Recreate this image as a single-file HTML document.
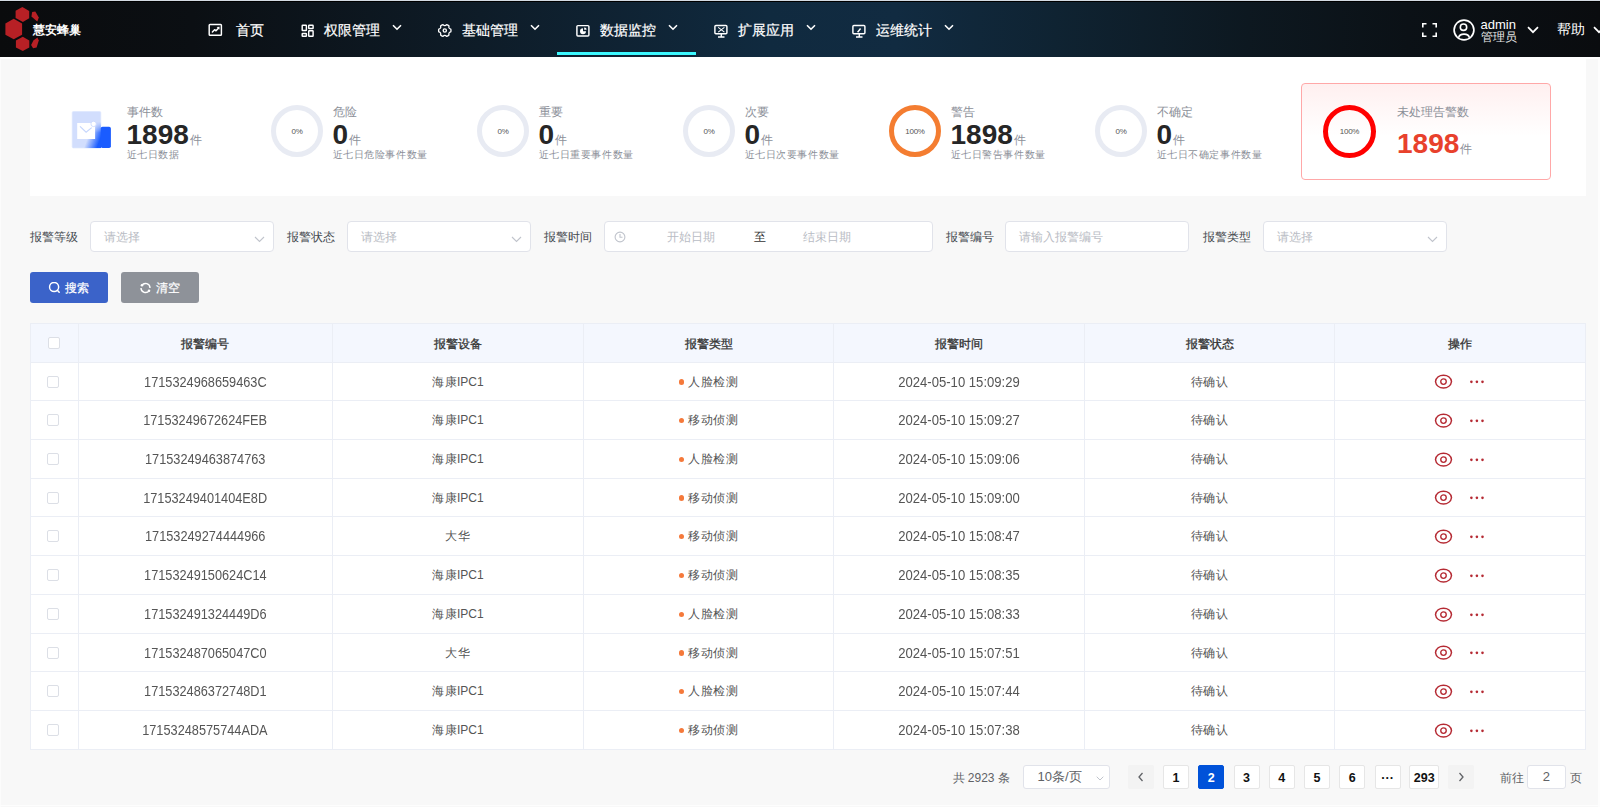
<!DOCTYPE html>
<html><head><meta charset="utf-8"><title>数据监控</title>
<style>
*{box-sizing:border-box;margin:0;padding:0}
html,body{width:1600px;height:807px;overflow:hidden}
body{background:#f8f8f8;font-family:"Liberation Sans",sans-serif;position:relative;color:#333}
.abs{position:absolute}
#topline{position:absolute;left:0;top:0;width:1600px;height:1px;background:#d3dae2}
#hdr{position:absolute;left:0;top:1px;width:1600px;height:56px;
 background:linear-gradient(90deg,#0a0b0d 0%,#0b0f13 12%,#0e1c28 30%,#102a3f 48%,#112b41 56%,#0f2332 66%,#0d1820 78%,#0b1116 88%,#0a0c0f 100%)}
#hdr .line0{position:absolute;left:0;top:0;width:1600px;height:1px;background:#000}
.nav{position:absolute;top:0;height:56px;color:#fff;font-size:13.5px;white-space:nowrap}
.nav .ic{position:absolute;top:23px}
.nav .tx{position:absolute;top:21px;line-height:20px;-webkit-text-stroke:0.2px #fff}
.nav .ch{position:absolute;top:24px}
#uline{position:absolute;left:557px;top:52px;width:139px;height:3.4px;background:#3cf8ff}
#whitestrip{position:absolute;left:0;top:57px;width:1600px;height:2px;background:#fff}
#stats{position:absolute;left:30px;top:57px;width:1556px;height:139px;background:#fff}
.st{position:absolute;white-space:nowrap}
.st .lb{position:absolute;left:0;top:1px;font-size:12px;line-height:14px;color:#8c9099}
.st .num{position:absolute;left:0;top:14px;font-size:28px;font-weight:bold;line-height:34px;color:#262626}
.st .unit{font-size:12px;font-weight:normal;color:#8c9099;margin-left:1px}
.st .sub{position:absolute;left:0;top:44px;font-size:10px;letter-spacing:0.6px;line-height:14px;color:#8c9099}
.ring{position:absolute;width:52px;height:52px;border-radius:50%;border:5px solid #e8ebf3}
.ring span{position:absolute;left:0;right:0;top:0;bottom:0;display:flex;align-items:center;justify-content:center;font-size:8px;color:#555;letter-spacing:-0.3px}
#redbox{position:absolute;left:1301px;top:82.5px;width:250px;height:97px;border:1px solid #ffa8a8;border-radius:4px;background:linear-gradient(180deg,#fff0f0 0%,#fff 55%,#fff 100%)}
.flb{position:absolute;top:229px;font-size:12px;line-height:16px;color:#464a50;white-space:nowrap}
.inp{position:absolute;top:221px;height:31px;background:#fff;border:1px solid #e1e3ea;border-radius:4px}
.ph{position:absolute;top:7px;font-size:12px;line-height:16px;color:#b9bcc4;white-space:nowrap}
.chev{position:absolute;top:14px}
.btn{position:absolute;top:272px;height:31px;width:78px;border-radius:3px;color:#fff;font-size:12px;white-space:nowrap}
.btn .bi{position:absolute}
.btn .bt{position:absolute;top:8px;line-height:16px;-webkit-text-stroke:0.2px #fff}
#tbl{position:absolute;background:#fff}
#tblb{position:absolute;left:30px;top:323px;width:1556px;height:427px;border:1px solid #ebeef5}
.th{position:absolute;background:#f4f7fe}
.thc{position:absolute;text-align:center;font-size:12px;font-weight:500;color:#333;-webkit-text-stroke:0.3px #333;white-space:nowrap}
.hl{position:absolute;left:30px;width:1556px;height:1px;background:#ebeef5}
.vl{position:absolute;top:323px;width:1px;height:427px;background:#ebeef5}
.td{position:absolute;height:38px;line-height:38px;text-align:center;font-size:13px;color:#555;white-space:nowrap}
.cj{font-size:12px;letter-spacing:0.5px}
.nm{display:inline-block;font-size:14px;transform-origin:50% 50%}
.cb{position:absolute;width:12px;height:12px;border:1px solid #dcdfe6;border-radius:2px;background:#fff}
.dot{display:inline-block;width:5.3px;height:5.3px;border-radius:50%;background:#f5793a;margin-right:4.5px;vertical-align:middle;position:relative;top:0px}
.eye{vertical-align:middle;position:relative;top:-0.5px}
.more{display:inline-block;vertical-align:middle;margin-left:16px;position:relative;top:-3px}
.more i{display:inline-block;width:2.6px;height:2.6px;border-radius:50%;background:#b52a33;margin:0 1.5px}
.pg{position:absolute;top:765px;height:24px;white-space:nowrap}
.pb{position:absolute;top:765px;height:24px;width:26.2px;background:#fff;border:1px solid #e6e6e6;border-radius:2px;text-align:center;line-height:25px;font-size:12.5px;font-weight:bold;color:#111}
.pb.act{background:#0052d9;border-color:#0052d9;color:#fff}
.pb.nav2{background:#f3f3f3;border-color:#f3f3f3;line-height:20px;font-weight:normal;color:#606266}

</style></head><body>
<div id="topline"></div>
<div id="hdr"><div class="line0"></div></div>
<!-- logo -->
<svg class="abs" style="left:0;top:0" width="45" height="57" viewBox="0 0 45 57">
 <g fill="#b82025">
  <polygon points="13.7,18.7 22.1,23.4 22.1,34.8 13.7,39.2 5.4,34.8 5.4,23.4"/>
  <polygon points="22.4,7 29.2,10.9 29.2,18.2 22.9,22 15.6,18 15.6,10.8"/>
  <polygon points="22.8,36.8 29.3,40.6 29.3,47.4 22.8,50.9 15.9,47.4 15.9,40.6"/>
  <polygon points="32.2,11.9 35.3,11.6 38.8,17.6 37.3,21.6 31.4,16.5"/>
  <polygon points="37.4,37.4 38.8,40.6 36.6,47.4 33.1,48.3 31.1,45 33.4,40.6"/>
 </g>
</svg>
<div class="abs" style="left:33px;top:22px;font-size:12px;line-height:16px;font-weight:bold;color:#fff;white-space:nowrap">慧安蜂巢</div>

<!-- nav -->
<svg class="abs" style="left:0;top:0" width="1000" height="57" viewBox="0 0 1000 57">
 <g fill="none" stroke="#fff" stroke-width="1.45">
  <rect x="209.2" y="24.5" width="12.2" height="10.8" rx="0.8"/>
  <polyline points="212.4,32 214.6,29.7 216,30.8 218.4,28.2" stroke-width="1.5" stroke-linejoin="round" stroke-linecap="round"/>
  <rect x="302.2" y="25.3" width="4.2" height="5.2" rx="0.5"/>
  <rect x="308.7" y="25.3" width="4.4" height="3.1" rx="0.5"/>
  <rect x="302.2" y="33.4" width="4.2" height="2.8" rx="0.5"/>
  <rect x="308.7" y="30.8" width="4.4" height="5.4" rx="0.5"/>
  <path d="M450.84,29.11 A6.2,6.2 0 0 1 450.84,31.89 Q448.18,32.45 449.03,35.03 A6.2,6.2 0 0 1 446.61,36.43 Q444.80,34.40 442.99,36.43 A6.2,6.2 0 0 1 440.57,35.03 Q441.42,32.45 438.76,31.89 A6.2,6.2 0 0 1 438.76,29.11 Q441.42,28.55 440.57,25.97 A6.2,6.2 0 0 1 442.99,24.57 Q444.80,26.60 446.61,24.57 A6.2,6.2 0 0 1 449.03,25.97 Q448.18,28.55 450.84,29.11 Z" stroke-linejoin="round" stroke-width="1.3"/>
  <circle cx="444.8" cy="30.5" r="1.6" stroke-width="1.4"/>
  <rect x="576.9" y="25.6" width="12" height="10.4" rx="1"/>
  <rect x="714.9" y="25.4" width="12" height="8.4" rx="1"/>
  <path d="M721.3,34 V36.2 M718,36.9 H724.5"/>
  <rect x="852.9" y="25.4" width="12" height="8.4" rx="1"/>
  <path d="M859.3,34 V36.2 M856,36.9 H862.5"/>
 </g>
 <g fill="#fff">
  <polygon points="216.6,27 219.6,26.8 219.4,29.8"/>
  <path d="M583,28.2 A3,3 0 1 0 586,31.2 L583,31.2 Z"/>
  <path d="M584.2,27.4 A2.3,2.3 0 0 1 586.6,29.8 L584.2,29.8 Z"/>
 </g>
 <g stroke="#fff" stroke-width="1.05" fill="none">
  <path d="M718.2,27.4 L724.4,32.1 M724.4,27.4 L718.2,32.1"/>
  <path d="M857.6,32.2 L860.6,28.6" stroke-width="1.5"/>
 </g>
</svg>

<div class="nav" style="left:0;width:1600px">
 <div class="tx" style="left:236px">首页</div>
 <div class="tx" style="left:323.5px">权限管理</div>
 <svg class="ch" style="left:392px" width="10" height="7" viewBox="0 0 10 7"><polyline points="1,1.2 5,5.2 9,1.2" fill="none" stroke="#fff" stroke-width="1.6"/></svg>
 <div class="tx" style="left:461.5px">基础管理</div>
 <svg class="ch" style="left:530px" width="10" height="7" viewBox="0 0 10 7"><polyline points="1,1.2 5,5.2 9,1.2" fill="none" stroke="#fff" stroke-width="1.6"/></svg>
 <div class="tx" style="left:599.5px">数据监控</div>
 <svg class="ch" style="left:668px" width="10" height="7" viewBox="0 0 10 7"><polyline points="1,1.2 5,5.2 9,1.2" fill="none" stroke="#fff" stroke-width="1.6"/></svg>
 <div class="tx" style="left:737.5px">扩展应用</div>
 <svg class="ch" style="left:806px" width="10" height="7" viewBox="0 0 10 7"><polyline points="1,1.2 5,5.2 9,1.2" fill="none" stroke="#fff" stroke-width="1.6"/></svg>
 <div class="tx" style="left:875.5px">运维统计</div>
 <svg class="ch" style="left:943.5px" width="10" height="7" viewBox="0 0 10 7"><polyline points="1,1.2 5,5.2 9,1.2" fill="none" stroke="#fff" stroke-width="1.6"/></svg>
</div>
<div id="uline"></div>

<!-- right header -->
<svg class="abs" style="left:1422px;top:23px" width="15" height="14" viewBox="0 0 15 14"><path d="M0.8,4.5 V0.8 H4.5 M10.5,0.8 H14.2 V4.5 M14.2,9.5 V13.2 H10.5 M4.5,13.2 H0.8 V9.5" fill="none" stroke="#fff" stroke-width="1.6"/></svg>
<svg class="abs" style="left:1453px;top:19px" width="22" height="22" viewBox="0 0 22 22"><circle cx="11" cy="11" r="9.9" fill="none" stroke="#fff" stroke-width="1.7"/><circle cx="10.5" cy="8.2" r="3.2" fill="none" stroke="#fff" stroke-width="1.6"/><path d="M5.6,18.6 C6.6,13.9 15.4,13.9 16.4,18.6" fill="none" stroke="#fff" stroke-width="1.6"/></svg>
<div class="abs" style="left:1480.5px;top:17px;font-size:13px;line-height:16px;color:#fff">admin</div>
<div class="abs" style="left:1480.5px;top:29px;font-size:12px;line-height:16px;color:#e8e8e8">管理员</div>
<svg class="abs" style="left:1527px;top:26px" width="12" height="8" viewBox="0 0 12 8"><polyline points="1,1.2 6,6.2 11,1.2" fill="none" stroke="#fff" stroke-width="1.7"/></svg>
<div class="abs" style="left:1556.5px;top:19px;font-size:14px;line-height:20px;color:#fff">帮助</div>
<svg class="abs" style="left:1593px;top:26px" width="12" height="8" viewBox="0 0 12 8"><polyline points="1,1.2 6,6.2 11,1.2" fill="none" stroke="#fff" stroke-width="1.7"/></svg>

<div id="whitestrip"></div>
<div class="abs" style="left:0;top:57px;width:1px;height:750px;background:#fcfcfc"></div>
<div class="abs" style="left:1598px;top:57px;width:2px;height:750px;background:#fdfdfd"></div>
<div class="abs" style="left:0;top:805px;width:1600px;height:1px;background:#fdfdfd"></div>
<div id="stats"></div>

<!-- stat1 icon -->
<svg class="abs" style="left:66px;top:105px" width="50" height="50" viewBox="0 0 50 50">
 <defs>
  <linearGradient id="lg1" gradientUnits="userSpaceOnUse" x1="18.6" y1="41" x2="30" y2="45.3"><stop offset="0" stop-color="#1a5cff" stop-opacity="0"/><stop offset="1" stop-color="#1a5cff"/></linearGradient>
  <linearGradient id="vm1" x1="0" y1="0" x2="0" y2="1"><stop offset="0.15" stop-color="#000"/><stop offset="0.5" stop-color="#fff"/></linearGradient>
  <mask id="mk1" maskUnits="userSpaceOnUse" x="0" y="0" width="50" height="50"><rect x="14" y="12" width="21" height="31.2" fill="url(#vm1)"/></mask>
 </defs>
 <rect x="6.2" y="6.5" width="28.6" height="36.4" rx="1.2" fill="#d2defd" stroke="#dce6fd" stroke-width="0.7"/>
 <rect x="14" y="12" width="21" height="31.2" fill="url(#lg1)" mask="url(#mk1)"/>
 <rect x="34.7" y="21.7" width="10.2" height="21.4" rx="1.8" fill="#1a5cff"/>
 <rect x="11.2" y="18" width="17.9" height="16" fill="#fff"/>
 <polyline points="14,21.4 20.1,27.3 25.7,22.6" fill="none" stroke="#c6d6fc" stroke-width="1.2"/>
 <circle cx="27.6" cy="18.9" r="2.7" fill="#fff" stroke="#c6d6fc" stroke-width="0.8"/>
</svg>
<div class="st" style="left:126.5px;top:104px"><div class="lb">事件数</div><div class="num">1898<span class="unit">件</span></div><div class="sub">近七日数据</div></div>

<div class="ring" style="left:271px;top:105px"><span>0%</span></div>
<div class="st" style="left:332.5px;top:104px"><div class="lb">危险</div><div class="num">0<span class="unit">件</span></div><div class="sub">近七日危险事件数量</div></div>
<div class="ring" style="left:477px;top:105px"><span>0%</span></div>
<div class="st" style="left:538.5px;top:104px"><div class="lb">重要</div><div class="num">0<span class="unit">件</span></div><div class="sub">近七日重要事件数量</div></div>
<div class="ring" style="left:683px;top:105px"><span>0%</span></div>
<div class="st" style="left:744.5px;top:104px"><div class="lb">次要</div><div class="num">0<span class="unit">件</span></div><div class="sub">近七日次要事件数量</div></div>
<div class="ring" style="left:889px;top:105px;border-color:#f47d31"><span>100%</span></div>
<div class="st" style="left:950.5px;top:104px"><div class="lb">警告</div><div class="num">1898<span class="unit">件</span></div><div class="sub">近七日警告事件数量</div></div>
<div class="ring" style="left:1095px;top:105px"><span>0%</span></div>
<div class="st" style="left:1156.5px;top:104px"><div class="lb">不确定</div><div class="num">0<span class="unit">件</span></div><div class="sub">近七日不确定事件数量</div></div>

<div id="redbox"></div>
<div class="ring" style="left:1323px;top:104.5px;width:53px;height:53px;border:5.5px solid #ff0000"><span>100%</span></div>
<div class="st" style="left:1397px;top:104px"><div class="lb">未处理告警数</div><div class="num" style="top:23px;color:#e8412c">1898<span class="unit">件</span></div></div>

<!-- filters -->
<div class="flb" style="left:30px">报警等级</div>
<div class="inp" style="left:90px;width:184px"><div class="ph" style="left:13px">请选择</div><svg class="chev" style="left:163px" width="11" height="7" viewBox="0 0 11 7"><polyline points="1,1 5.5,5.5 10,1" fill="none" stroke="#c0c4cc" stroke-width="1.1"/></svg></div>
<div class="flb" style="left:287px">报警状态</div>
<div class="inp" style="left:346.5px;width:184px"><div class="ph" style="left:13px">请选择</div><svg class="chev" style="left:163px" width="11" height="7" viewBox="0 0 11 7"><polyline points="1,1 5.5,5.5 10,1" fill="none" stroke="#c0c4cc" stroke-width="1.1"/></svg></div>
<div class="flb" style="left:543.5px">报警时间</div>
<div class="inp" style="left:603.5px;width:329px">
 <svg class="abs" style="left:9.5px;top:8.5px" width="12" height="12" viewBox="0 0 12 12"><circle cx="6" cy="6" r="4.9" fill="none" stroke="#c0c4cc" stroke-width="1.1"/><path d="M6,3 V6.3 H8.5" fill="none" stroke="#c0c4cc" stroke-width="1.1"/></svg>
 <div class="ph" style="left:62px">开始日期</div>
 <div class="ph" style="left:149px;color:#333">至</div>
 <div class="ph" style="left:198px">结束日期</div>
</div>
<div class="flb" style="left:945.5px">报警编号</div>
<div class="inp" style="left:1005px;width:184px"><div class="ph" style="left:13px">请输入报警编号</div></div>
<div class="flb" style="left:1202.5px">报警类型</div>
<div class="inp" style="left:1262.5px;width:184px"><div class="ph" style="left:13px">请选择</div><svg class="chev" style="left:163px" width="11" height="7" viewBox="0 0 11 7"><polyline points="1,1 5.5,5.5 10,1" fill="none" stroke="#c0c4cc" stroke-width="1.1"/></svg></div>

<div class="btn" style="left:30px;background:#3b63c9">
 <svg class="bi" style="left:18px;top:10px" width="13" height="13" viewBox="0 0 13 13"><circle cx="6.1" cy="5" r="4.55" fill="none" stroke="#fff" stroke-width="1.45"/><path d="M9.3,8.3 L11.2,10.3" stroke="#fff" stroke-width="1.5" stroke-linecap="round"/></svg>
 <div class="bt" style="left:34.5px">搜索</div>
</div>
<div class="btn" style="left:120.5px;background:#8e9299">
 <svg class="bi" style="left:19px;top:9.5px" width="12" height="12" viewBox="0 0 12 12"><g fill="none" stroke="#fff" stroke-width="1.4"><path d="M1.81,3.42 A4.5,4.5 0 0 1 10,6"/><path d="M1,6 A4.5,4.5 0 0 0 9.19,8.58"/></g><circle cx="2" cy="3.3" r="1.3" fill="#fff"/><circle cx="9" cy="8.7" r="1.3" fill="#fff"/></svg>
 <div class="bt" style="left:35px">清空</div>
</div>

<!-- table -->
<div id="tbl" style="left:30px;top:323px;width:1556px;height:427px"></div>
<div class="th" style="left:30px;top:323px;width:1556px;height:39px"></div>
<div class="cb" style="left:48.3px;top:337px"></div>
<div class="thc" style="left:78.4px;width:253.9px;top:324.5px;height:39px;line-height:39px">报警编号</div>
<div class="thc" style="left:332.3px;width:251.1px;top:324.5px;height:39px;line-height:39px">报警设备</div>
<div class="thc" style="left:583.4px;width:250.3px;top:324.5px;height:39px;line-height:39px">报警类型</div>
<div class="thc" style="left:833.7px;width:250.7px;top:324.5px;height:39px;line-height:39px">报警时间</div>
<div class="thc" style="left:1084.4px;width:250.6px;top:324.5px;height:39px;line-height:39px">报警状态</div>
<div class="thc" style="left:1335.0px;width:250.5px;top:324.5px;height:39px;line-height:39px">操作</div>
<div class="cb" style="left:46.5px;top:376px"></div>
<svg class="abs" style="left:1434px;top:374.30px" width="52" height="16" viewBox="0 0 52 16"><path d="M1.5,7.6 C2,3.7 5.4,1.2 9.5,1.2 C13.6,1.2 17,3.7 17.5,7.6 C17,11.5 13.6,14 9.5,14 C5.4,14 2,11.5 1.5,7.6 Z" fill="none" stroke="#b52a33" stroke-width="1.45"/><circle cx="9.5" cy="7.6" r="2.75" fill="none" stroke="#b52a33" stroke-width="1.35"/><g fill="#b52a33"><circle cx="37.4" cy="7.85" r="1.3"/><circle cx="42.9" cy="7.85" r="1.3"/><circle cx="48.5" cy="7.85" r="1.3"/></g></svg>
<div class="td" style="left:78.4px;width:253.9px;top:362.50px"><span class="nm" style="transform:scaleX(0.91)">1715324968659463C</span></div>
<div class="td" style="left:332.3px;width:251.1px;top:362.50px"><span class="cj">海康</span><span style="font-size:12px">IPC1</span></div>
<div class="td" style="left:583.4px;width:250.3px;top:362.50px"><span class="dot"></span><span class="cj">人脸检测</span></div>
<div class="td" style="left:833.7px;width:250.7px;top:362.50px"><span class="nm" style="transform:scaleX(0.935)">2024-05-10 15:09:29</span></div>
<div class="td" style="left:1084.4px;width:250.6px;top:362.50px"><span class="cj">待确认</span></div>
<div class="td" style="left:1335.0px;width:250.5px;top:362.50px"></div>
<div class="cb" style="left:46.5px;top:414px"></div>
<svg class="abs" style="left:1434px;top:412.80px" width="52" height="16" viewBox="0 0 52 16"><path d="M1.5,7.6 C2,3.7 5.4,1.2 9.5,1.2 C13.6,1.2 17,3.7 17.5,7.6 C17,11.5 13.6,14 9.5,14 C5.4,14 2,11.5 1.5,7.6 Z" fill="none" stroke="#b52a33" stroke-width="1.45"/><circle cx="9.5" cy="7.6" r="2.75" fill="none" stroke="#b52a33" stroke-width="1.35"/><g fill="#b52a33"><circle cx="37.4" cy="7.85" r="1.3"/><circle cx="42.9" cy="7.85" r="1.3"/><circle cx="48.5" cy="7.85" r="1.3"/></g></svg>
<div class="td" style="left:78.4px;width:253.9px;top:401.00px"><span class="nm" style="transform:scaleX(0.91)">17153249672624FEB</span></div>
<div class="td" style="left:332.3px;width:251.1px;top:401.00px"><span class="cj">海康</span><span style="font-size:12px">IPC1</span></div>
<div class="td" style="left:583.4px;width:250.3px;top:401.00px"><span class="dot"></span><span class="cj">移动侦测</span></div>
<div class="td" style="left:833.7px;width:250.7px;top:401.00px"><span class="nm" style="transform:scaleX(0.935)">2024-05-10 15:09:27</span></div>
<div class="td" style="left:1084.4px;width:250.6px;top:401.00px"><span class="cj">待确认</span></div>
<div class="td" style="left:1335.0px;width:250.5px;top:401.00px"></div>
<div class="cb" style="left:46.5px;top:453px"></div>
<svg class="abs" style="left:1434px;top:451.80px" width="52" height="16" viewBox="0 0 52 16"><path d="M1.5,7.6 C2,3.7 5.4,1.2 9.5,1.2 C13.6,1.2 17,3.7 17.5,7.6 C17,11.5 13.6,14 9.5,14 C5.4,14 2,11.5 1.5,7.6 Z" fill="none" stroke="#b52a33" stroke-width="1.45"/><circle cx="9.5" cy="7.6" r="2.75" fill="none" stroke="#b52a33" stroke-width="1.35"/><g fill="#b52a33"><circle cx="37.4" cy="7.85" r="1.3"/><circle cx="42.9" cy="7.85" r="1.3"/><circle cx="48.5" cy="7.85" r="1.3"/></g></svg>
<div class="td" style="left:78.4px;width:253.9px;top:440.00px"><span class="nm" style="transform:scaleX(0.91)">17153249463874763</span></div>
<div class="td" style="left:332.3px;width:251.1px;top:440.00px"><span class="cj">海康</span><span style="font-size:12px">IPC1</span></div>
<div class="td" style="left:583.4px;width:250.3px;top:440.00px"><span class="dot"></span><span class="cj">人脸检测</span></div>
<div class="td" style="left:833.7px;width:250.7px;top:440.00px"><span class="nm" style="transform:scaleX(0.935)">2024-05-10 15:09:06</span></div>
<div class="td" style="left:1084.4px;width:250.6px;top:440.00px"><span class="cj">待确认</span></div>
<div class="td" style="left:1335.0px;width:250.5px;top:440.00px"></div>
<div class="cb" style="left:46.5px;top:492px"></div>
<svg class="abs" style="left:1434px;top:490.30px" width="52" height="16" viewBox="0 0 52 16"><path d="M1.5,7.6 C2,3.7 5.4,1.2 9.5,1.2 C13.6,1.2 17,3.7 17.5,7.6 C17,11.5 13.6,14 9.5,14 C5.4,14 2,11.5 1.5,7.6 Z" fill="none" stroke="#b52a33" stroke-width="1.45"/><circle cx="9.5" cy="7.6" r="2.75" fill="none" stroke="#b52a33" stroke-width="1.35"/><g fill="#b52a33"><circle cx="37.4" cy="7.85" r="1.3"/><circle cx="42.9" cy="7.85" r="1.3"/><circle cx="48.5" cy="7.85" r="1.3"/></g></svg>
<div class="td" style="left:78.4px;width:253.9px;top:478.50px"><span class="nm" style="transform:scaleX(0.91)">17153249401404E8D</span></div>
<div class="td" style="left:332.3px;width:251.1px;top:478.50px"><span class="cj">海康</span><span style="font-size:12px">IPC1</span></div>
<div class="td" style="left:583.4px;width:250.3px;top:478.50px"><span class="dot"></span><span class="cj">移动侦测</span></div>
<div class="td" style="left:833.7px;width:250.7px;top:478.50px"><span class="nm" style="transform:scaleX(0.935)">2024-05-10 15:09:00</span></div>
<div class="td" style="left:1084.4px;width:250.6px;top:478.50px"><span class="cj">待确认</span></div>
<div class="td" style="left:1335.0px;width:250.5px;top:478.50px"></div>
<div class="cb" style="left:46.5px;top:530px"></div>
<svg class="abs" style="left:1434px;top:528.80px" width="52" height="16" viewBox="0 0 52 16"><path d="M1.5,7.6 C2,3.7 5.4,1.2 9.5,1.2 C13.6,1.2 17,3.7 17.5,7.6 C17,11.5 13.6,14 9.5,14 C5.4,14 2,11.5 1.5,7.6 Z" fill="none" stroke="#b52a33" stroke-width="1.45"/><circle cx="9.5" cy="7.6" r="2.75" fill="none" stroke="#b52a33" stroke-width="1.35"/><g fill="#b52a33"><circle cx="37.4" cy="7.85" r="1.3"/><circle cx="42.9" cy="7.85" r="1.3"/><circle cx="48.5" cy="7.85" r="1.3"/></g></svg>
<div class="td" style="left:78.4px;width:253.9px;top:517.00px"><span class="nm" style="transform:scaleX(0.91)">17153249274444966</span></div>
<div class="td" style="left:332.3px;width:251.1px;top:517.00px"><span class="cj">大华</span></div>
<div class="td" style="left:583.4px;width:250.3px;top:517.00px"><span class="dot"></span><span class="cj">移动侦测</span></div>
<div class="td" style="left:833.7px;width:250.7px;top:517.00px"><span class="nm" style="transform:scaleX(0.935)">2024-05-10 15:08:47</span></div>
<div class="td" style="left:1084.4px;width:250.6px;top:517.00px"><span class="cj">待确认</span></div>
<div class="td" style="left:1335.0px;width:250.5px;top:517.00px"></div>
<div class="cb" style="left:46.5px;top:569px"></div>
<svg class="abs" style="left:1434px;top:567.80px" width="52" height="16" viewBox="0 0 52 16"><path d="M1.5,7.6 C2,3.7 5.4,1.2 9.5,1.2 C13.6,1.2 17,3.7 17.5,7.6 C17,11.5 13.6,14 9.5,14 C5.4,14 2,11.5 1.5,7.6 Z" fill="none" stroke="#b52a33" stroke-width="1.45"/><circle cx="9.5" cy="7.6" r="2.75" fill="none" stroke="#b52a33" stroke-width="1.35"/><g fill="#b52a33"><circle cx="37.4" cy="7.85" r="1.3"/><circle cx="42.9" cy="7.85" r="1.3"/><circle cx="48.5" cy="7.85" r="1.3"/></g></svg>
<div class="td" style="left:78.4px;width:253.9px;top:556.00px"><span class="nm" style="transform:scaleX(0.91)">17153249150624C14</span></div>
<div class="td" style="left:332.3px;width:251.1px;top:556.00px"><span class="cj">海康</span><span style="font-size:12px">IPC1</span></div>
<div class="td" style="left:583.4px;width:250.3px;top:556.00px"><span class="dot"></span><span class="cj">移动侦测</span></div>
<div class="td" style="left:833.7px;width:250.7px;top:556.00px"><span class="nm" style="transform:scaleX(0.935)">2024-05-10 15:08:35</span></div>
<div class="td" style="left:1084.4px;width:250.6px;top:556.00px"><span class="cj">待确认</span></div>
<div class="td" style="left:1335.0px;width:250.5px;top:556.00px"></div>
<div class="cb" style="left:46.5px;top:608px"></div>
<svg class="abs" style="left:1434px;top:606.80px" width="52" height="16" viewBox="0 0 52 16"><path d="M1.5,7.6 C2,3.7 5.4,1.2 9.5,1.2 C13.6,1.2 17,3.7 17.5,7.6 C17,11.5 13.6,14 9.5,14 C5.4,14 2,11.5 1.5,7.6 Z" fill="none" stroke="#b52a33" stroke-width="1.45"/><circle cx="9.5" cy="7.6" r="2.75" fill="none" stroke="#b52a33" stroke-width="1.35"/><g fill="#b52a33"><circle cx="37.4" cy="7.85" r="1.3"/><circle cx="42.9" cy="7.85" r="1.3"/><circle cx="48.5" cy="7.85" r="1.3"/></g></svg>
<div class="td" style="left:78.4px;width:253.9px;top:595.00px"><span class="nm" style="transform:scaleX(0.91)">171532491324449D6</span></div>
<div class="td" style="left:332.3px;width:251.1px;top:595.00px"><span class="cj">海康</span><span style="font-size:12px">IPC1</span></div>
<div class="td" style="left:583.4px;width:250.3px;top:595.00px"><span class="dot"></span><span class="cj">人脸检测</span></div>
<div class="td" style="left:833.7px;width:250.7px;top:595.00px"><span class="nm" style="transform:scaleX(0.935)">2024-05-10 15:08:33</span></div>
<div class="td" style="left:1084.4px;width:250.6px;top:595.00px"><span class="cj">待确认</span></div>
<div class="td" style="left:1335.0px;width:250.5px;top:595.00px"></div>
<div class="cb" style="left:46.5px;top:647px"></div>
<svg class="abs" style="left:1434px;top:645.30px" width="52" height="16" viewBox="0 0 52 16"><path d="M1.5,7.6 C2,3.7 5.4,1.2 9.5,1.2 C13.6,1.2 17,3.7 17.5,7.6 C17,11.5 13.6,14 9.5,14 C5.4,14 2,11.5 1.5,7.6 Z" fill="none" stroke="#b52a33" stroke-width="1.45"/><circle cx="9.5" cy="7.6" r="2.75" fill="none" stroke="#b52a33" stroke-width="1.35"/><g fill="#b52a33"><circle cx="37.4" cy="7.85" r="1.3"/><circle cx="42.9" cy="7.85" r="1.3"/><circle cx="48.5" cy="7.85" r="1.3"/></g></svg>
<div class="td" style="left:78.4px;width:253.9px;top:633.50px"><span class="nm" style="transform:scaleX(0.91)">171532487065047C0</span></div>
<div class="td" style="left:332.3px;width:251.1px;top:633.50px"><span class="cj">大华</span></div>
<div class="td" style="left:583.4px;width:250.3px;top:633.50px"><span class="dot"></span><span class="cj">移动侦测</span></div>
<div class="td" style="left:833.7px;width:250.7px;top:633.50px"><span class="nm" style="transform:scaleX(0.935)">2024-05-10 15:07:51</span></div>
<div class="td" style="left:1084.4px;width:250.6px;top:633.50px"><span class="cj">待确认</span></div>
<div class="td" style="left:1335.0px;width:250.5px;top:633.50px"></div>
<div class="cb" style="left:46.5px;top:685px"></div>
<svg class="abs" style="left:1434px;top:683.80px" width="52" height="16" viewBox="0 0 52 16"><path d="M1.5,7.6 C2,3.7 5.4,1.2 9.5,1.2 C13.6,1.2 17,3.7 17.5,7.6 C17,11.5 13.6,14 9.5,14 C5.4,14 2,11.5 1.5,7.6 Z" fill="none" stroke="#b52a33" stroke-width="1.45"/><circle cx="9.5" cy="7.6" r="2.75" fill="none" stroke="#b52a33" stroke-width="1.35"/><g fill="#b52a33"><circle cx="37.4" cy="7.85" r="1.3"/><circle cx="42.9" cy="7.85" r="1.3"/><circle cx="48.5" cy="7.85" r="1.3"/></g></svg>
<div class="td" style="left:78.4px;width:253.9px;top:672.00px"><span class="nm" style="transform:scaleX(0.91)">171532486372748D1</span></div>
<div class="td" style="left:332.3px;width:251.1px;top:672.00px"><span class="cj">海康</span><span style="font-size:12px">IPC1</span></div>
<div class="td" style="left:583.4px;width:250.3px;top:672.00px"><span class="dot"></span><span class="cj">人脸检测</span></div>
<div class="td" style="left:833.7px;width:250.7px;top:672.00px"><span class="nm" style="transform:scaleX(0.935)">2024-05-10 15:07:44</span></div>
<div class="td" style="left:1084.4px;width:250.6px;top:672.00px"><span class="cj">待确认</span></div>
<div class="td" style="left:1335.0px;width:250.5px;top:672.00px"></div>
<div class="cb" style="left:46.5px;top:724px"></div>
<svg class="abs" style="left:1434px;top:722.80px" width="52" height="16" viewBox="0 0 52 16"><path d="M1.5,7.6 C2,3.7 5.4,1.2 9.5,1.2 C13.6,1.2 17,3.7 17.5,7.6 C17,11.5 13.6,14 9.5,14 C5.4,14 2,11.5 1.5,7.6 Z" fill="none" stroke="#b52a33" stroke-width="1.45"/><circle cx="9.5" cy="7.6" r="2.75" fill="none" stroke="#b52a33" stroke-width="1.35"/><g fill="#b52a33"><circle cx="37.4" cy="7.85" r="1.3"/><circle cx="42.9" cy="7.85" r="1.3"/><circle cx="48.5" cy="7.85" r="1.3"/></g></svg>
<div class="td" style="left:78.4px;width:253.9px;top:711.00px"><span class="nm" style="transform:scaleX(0.91)">17153248575744ADA</span></div>
<div class="td" style="left:332.3px;width:251.1px;top:711.00px"><span class="cj">海康</span><span style="font-size:12px">IPC1</span></div>
<div class="td" style="left:583.4px;width:250.3px;top:711.00px"><span class="dot"></span><span class="cj">移动侦测</span></div>
<div class="td" style="left:833.7px;width:250.7px;top:711.00px"><span class="nm" style="transform:scaleX(0.935)">2024-05-10 15:07:38</span></div>
<div class="td" style="left:1084.4px;width:250.6px;top:711.00px"><span class="cj">待确认</span></div>
<div class="td" style="left:1335.0px;width:250.5px;top:711.00px"></div>
<div class="hl" style="top:362px"></div>
<div class="hl" style="top:400px"></div>
<div class="hl" style="top:439px"></div>
<div class="hl" style="top:478px"></div>
<div class="hl" style="top:516px"></div>
<div class="hl" style="top:555px"></div>
<div class="hl" style="top:594px"></div>
<div class="hl" style="top:633px"></div>
<div class="hl" style="top:671px"></div>
<div class="hl" style="top:710px"></div>
<div class="hl" style="top:749px"></div>
<div class="vl" style="left:78px"></div>
<div class="vl" style="left:332px"></div>
<div class="vl" style="left:583px"></div>
<div class="vl" style="left:833px"></div>
<div class="vl" style="left:1084px"></div>
<div class="vl" style="left:1334px"></div>
<div id="tblb"></div>
<!-- pagination -->
<div class="abs" style="left:952.5px;top:770px;font-size:12px;line-height:16px;color:#606266;white-space:nowrap">共 2923 条</div>
<div class="inp" style="left:1022.5px;top:765px;width:87.5px;height:24px;border-radius:3px"><div class="ph" style="left:14px;top:3px;color:#606266;font-size:13px">10条/页</div><svg class="chev" style="left:72px;top:10px" width="8" height="5" viewBox="0 0 8 5"><polyline points="0.7,0.7 4,4 7.3,0.7" fill="none" stroke="#c0c4cc" stroke-width="1"/></svg></div>
<div class="pb nav2" style="left:1128px"><svg width="8" height="10" viewBox="0 0 8 10" style="vertical-align:middle"><polyline points="5.5,1 2,5 5.5,9" fill="none" stroke="#606266" stroke-width="1.3"/></svg></div>
<div class="pb" style="left:1163px">1</div>
<div class="pb act" style="left:1198.2px">2</div>
<div class="pb" style="left:1233.5px">3</div>
<div class="pb" style="left:1268.6px">4</div>
<div class="pb" style="left:1304px">5</div>
<div class="pb" style="left:1339.2px">6</div>
<div class="pb" style="left:1374.5px">···</div>
<div class="pb" style="left:1409.2px;width:30.1px">293</div>
<div class="pb nav2" style="left:1448px"><svg width="8" height="10" viewBox="0 0 8 10" style="vertical-align:middle"><polyline points="2.5,1 6,5 2.5,9" fill="none" stroke="#606266" stroke-width="1.3"/></svg></div>
<div class="abs" style="left:1500px;top:770px;font-size:12px;line-height:16px;color:#606266;white-space:nowrap">前往</div>
<div class="inp" style="left:1526.5px;top:765px;width:39.5px;height:24px;border-radius:3px;text-align:center;font-size:13px;line-height:22px;color:#606266">2</div>
<div class="abs" style="left:1570px;top:770px;font-size:12px;line-height:16px;color:#606266">页</div>

</body></html>
